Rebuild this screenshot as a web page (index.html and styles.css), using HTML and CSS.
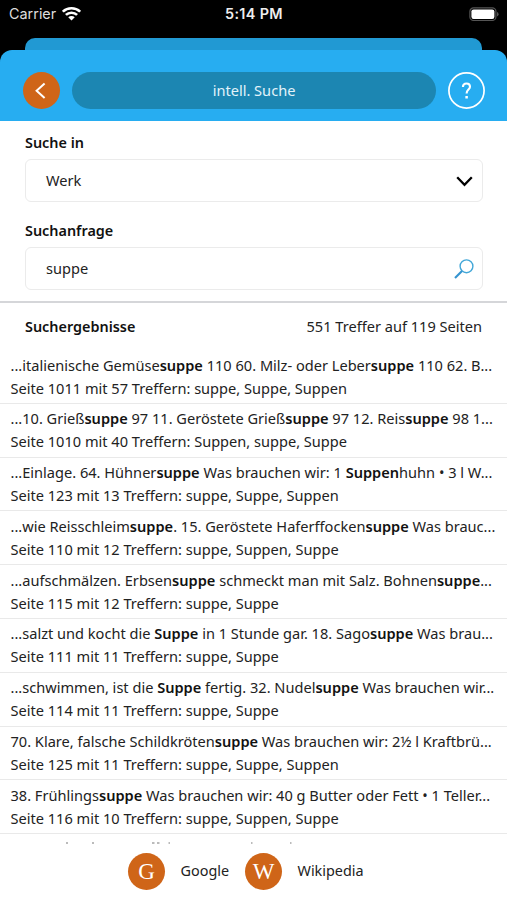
FILE: index.html
```html
<!DOCTYPE html>
<html lang="de">
<head>
<meta charset="utf-8">
<title>intell. Suche</title>
<link rel="stylesheet" href="styles.css">
</head>
<body>
<div class="screen">
  <div class="status">
    <div class="carrier"><span>Carrier</span>
      <svg class="wifi" width="19" height="14" viewBox="0 0 18 14" preserveAspectRatio="none"><g fill="none" stroke="#fff" stroke-width="2.5"><path d="M.8 4.7a11.6 11.6 0 0 1 16.4 0"/><path d="M3.7 7.9a7.5 7.5 0 0 1 10.6 0"/></g><path d="M9 13.4 5.9 10.3a4.4 4.4 0 0 1 6.2 0z" fill="#fff"/></svg>
    </div>
    <b class="time">5:14 PM</b>
    <svg class="battery" width="30" height="15" viewBox="0 0 30 15"><rect x=".9" y=".9" width="26" height="12.6" rx="3.6" fill="none" stroke="#555" stroke-width="1.2"/><rect x="2.4" y="2.4" width="23" height="9.6" rx="2.2" fill="#fff"/><path d="M28 5v4.4q1.6-.6 1.6-2.2T28 5" fill="#555"/></svg>
  </div>
  <div class="sheet-behind"></div>
  <header class="bar">
    <span class="disc"><svg width="37" height="37" viewBox="0 0 37 37"><path d="M21.6 11.4 13.6 18.7 21.6 26" fill="none" stroke="#fff" stroke-width="2"/></svg></span>
    <div class="title">intell. Suche</div>
    <span class="help"><svg width="37" height="37" viewBox="0 0 37 37" fill="none" stroke="#fff"><circle cx="18.5" cy="18.5" r="17.6" stroke-width="1.7"/><path d="M14.9 15q.1-3.500 3.600-3.500t3.500 3.200c0 2.900-3.400 3-3.400 6.800" stroke-width="2.1"/><path d="M18.6 24v2.5" stroke-width="2.5"/></svg></span>
  </header>
  <section class="form">
    <label class="label">Suche in</label>
    <div class="field"><span>Werk</span><svg class="chevron" width="17" height="11" viewBox="0 0 17 11"><path d="M1.2 1.3 8.5 8.8l7.3-7.5" fill="none" stroke="#000" stroke-width="2.3"/></svg></div>
    <label class="label second">Suchanfrage</label>
    <div class="field"><span>suppe</span><svg class="lens" width="20" height="20" viewBox="0 0 20 20" fill="none" stroke="#42a7d8"><circle cx="12.5" cy="7.3" r="6.4" stroke-width="1.4"/><path d="m8 12-7 7" stroke-width="2.2" stroke="#3594d0"/></svg></div>
  </section>
  <div class="summary"><b>Suchergebnisse</b><span>551 Treffer auf 119 Seiten</span></div>
  <main class="results">
    <div class="row"><p>...italienische Gemüse<b>suppe</b> 110 60. Milz- oder Leber<b>suppe</b> 110 62. B...</p><p>Seite 1011 mit 57 Treffern: suppe, Suppe, Suppen</p></div>
    <div class="row"><p>...10. Grieß<b>suppe</b> 97 11. Geröstete Grieß<b>suppe</b> 97 12. Reis<b>suppe</b> 98 1...</p><p>Seite 1010 mit 40 Treffern: Suppen, suppe, Suppe</p></div>
    <div class="row"><p>...Einlage. 64. Hühner<b>suppe</b> Was brauchen wir: 1 <b>Suppen</b>huhn • 3 l W...</p><p>Seite 123 mit 13 Treffern: suppe, Suppe, Suppen</p></div>
    <div class="row"><p>...wie Reisschleim<b>suppe</b>. 15. Geröstete Haferffocken<b>suppe</b> Was brauc...</p><p>Seite 110 mit 12 Treffern: suppe, Suppen, Suppe</p></div>
    <div class="row"><p>...aufschmälzen. Erbsen<b>suppe</b> schmeckt man mit Salz. Bohnen<b>suppe</b>...</p><p>Seite 115 mit 12 Treffern: suppe, Suppe</p></div>
    <div class="row"><p>...salzt und kocht die <b>Suppe</b> in 1 Stunde gar. 18. Sago<b>suppe</b> Was brau...</p><p>Seite 111 mit 11 Treffern: suppe, Suppe</p></div>
    <div class="row"><p>...schwimmen, ist die <b>Suppe</b> fertig. 32. Nudel<b>suppe</b> Was brauchen wir...</p><p>Seite 114 mit 11 Treffern: suppe, Suppe</p></div>
    <div class="row"><p>70. Klare, falsche Schildkröten<b>suppe</b> Was brauchen wir: 2½ l Kraftbrü...</p><p>Seite 125 mit 11 Treffern: suppe, Suppe, Suppen</p></div>
    <div class="row"><p>38. Frühlings<b>suppe</b> Was brauchen wir: 40 g Butter oder Fett • 1 Teller...</p><p>Seite 116 mit 10 Treffern: suppe, Suppen, Suppe</p></div>
    <!-- tips of the next row, cut off by the footer -->
    <svg width="507" height="12" viewBox="0 0 507 12" fill="#bbb"><path d="M66 8h2v2h-2zM92 8h2v2h-2zM152 8h2.5v2H152zM157 8h2.5v2H157zM168.5 8h1.5v2h-1.500zM251 8h1.500v2H251zM290 8h1.500v2H290z"/></svg>
  </main>
  <footer class="links">
    <span class="disc letter">G</span><span class="name">Google</span>
    <span class="disc letter">W</span><span class="name">Wikipedia</span>
  </footer>
</div>
</body>
</html>
```
FILE: styles.css
```css
* { box-sizing: border-box; }
body { margin: 0; background: #fff; color: #222; font: 14.58px/20px "Noto Sans", sans-serif; }
b { font-weight: 600; color: #111; }
p { margin: 0; }
svg { display: block; flex: none; }
.screen { width: 507px; height: 900px; overflow: hidden; display: flex; flex-direction: column; background: linear-gradient(#000 0 100px, #fff 100px); }
.status { height: 38px; padding: 0 8px 10px 9px; flex: none; display: grid; grid-template-columns: 1fr auto 1fr; align-items: center; color: #fff; font: 14.4px/20px Inter, sans-serif; }
.carrier { display: flex; align-items: center; gap: 6px; color: #ddd; }
.time { color: #eee; letter-spacing: .35px; }
.battery { justify-self: end; }
.sheet-behind { height: 12px; flex: none; margin: 0 25px; background: #2199d3; border-radius: 10px 10px 0 0; }
.bar { height: 71px; flex: none; display: flex; align-items: center; padding: 10px 22px 0 23px; background: #27adf1; border-radius: 12px 12px 0 0; }
.disc { width: 37px; height: 37px; flex: none; border-radius: 50%; background: #cf6518; }
.title { flex: 1; height: 37px; margin: 0 12px; border-radius: 19px; background: #1c86b2; color: #e2f3fa; text-align: center; line-height: 37px; }
.form { height: 182px; flex: none; padding: 12px 24px 0 25px; border-bottom: 2px solid #d5d6d9; }
.label { display: block; font-size: 14.4px; font-weight: 600; color: #111; }
.second { margin-top: 19px; }
.field { height: 43px; margin-top: 6px; padding: 0 9px 0 20px; border: 1px solid #ebebeb; border-radius: 6px; display: flex; align-items: center; justify-content: space-between; }
.field span { padding-bottom: 2px; }
.chevron { margin-top: 2px; }
.lens { margin-right: -1px; }
.summary { height: 47px; flex: none; padding: 14px 25px 0; display: flex; justify-content: space-between; }
.summary b { font-size: 14.4px; }
.summary span { margin-top: -1px; }
.results { flex: none; height: 494px; overflow: hidden; }
.row { height: 53.8px; padding: 3.5px 0 0 10.5px; border-bottom: 1px solid #e9e9e9; line-height: 23px; white-space: nowrap; }
.links { flex: none; height: 56px; padding: 9px 0 0 128px; display: flex; font-size: 14.4px; }
.letter { color: #fff; font: 23px/37px "Liberation Serif", serif; text-align: center; }
.name { width: 48px; margin: 8px 16.5px 0 15.5px; white-space: nowrap; }
```
